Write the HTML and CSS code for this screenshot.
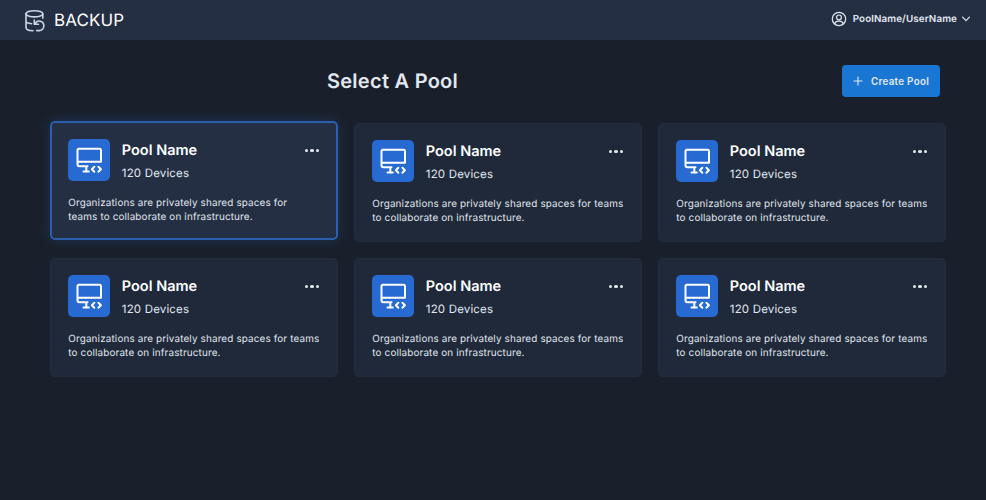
FILE: index.html
```html
<!DOCTYPE html>
<html lang="en">
<head>
<meta charset="utf-8">
<title>Backup</title>
<link rel="stylesheet" href="styles.css">
</head>
<body>
<svg class="sprite" aria-hidden="true">
  <symbol id="device" viewBox="0 0 42 42">
    <path d="M19.500 27.200H11.500a2 2 0 0 1-2-2V11.200a1.500 1.500 0 0 1 1.500-1.500H31.500a1.500 1.500 0 0 1 1.500 1.500V22.800H9.500M18.300 27.200V32.500M15.500 32.600H20.800M26.300 27.700L23.800 30.200L26.300 32.700M30.400 27.700L32.900 30.200L30.400 32.700"/>
  </symbol>
</svg>
<header class="topbar">
  <div class="brand">
    <svg class="brand-icon" viewBox="0 0 22 24">
      <ellipse cx="10.400" cy="4.800" rx="8.400" ry="3.100"/>
      <path d="M2 4.800V18.400C2 20.200 4.900 21.500 9 21.700M18.800 4.800V9.200M2 12c0 1.400 2.300 2.400 5.600 2.700M10.300 11v4.200h4.200M10.700 15.200C12 12.600 14.300 11.600 16.300 12.200a4.800 4.800 0 0 1-.8 9.400H12.700"/>
    </svg>
    <span>BACKUP</span>
  </div>
  <div class="account">
    <svg class="user-icon" viewBox="0 0 16 16"><circle cx="8" cy="8" r="6.700"/><circle cx="8" cy="6.400" r="2.400"/><path d="M3.600 13C4.200 11 5.600 10.200 8 10.200S11.800 11 12.400 13"/></svg>
    <span>PoolName/UserName</span>
    <svg class="chevron" viewBox="0 0 8 6"><path d="M.6 1.200L4 4.600L7.400 1.200"/></svg>
  </div>
</header>
<main>
  <div class="heading">
    <h1>Select A Pool</h1>
    <button class="create"><svg viewBox="0 0 10 10"><path d="M5 1V9M1 5H9"/></svg><span>Create Pool</span></button>
  </div>
  <div class="pools">
    <article class="card selected">
      <div class="card-head"><svg class="tile"><use href="#device"/></svg><div class="info"><h2>Pool Name</h2><p>120 Devices</p></div><div class="more"><i></i><i></i><i></i></div></div>
      <p class="desc">Organizations are privately shared spaces for teams to collaborate on infrastructure.</p>
    </article>
    <article class="card">
      <div class="card-head"><svg class="tile"><use href="#device"/></svg><div class="info"><h2>Pool Name</h2><p>120 Devices</p></div><div class="more"><i></i><i></i><i></i></div></div>
      <p class="desc">Organizations are privately shared spaces for teams to collaborate on infrastructure.</p>
    </article>
    <article class="card">
      <div class="card-head"><svg class="tile"><use href="#device"/></svg><div class="info"><h2>Pool Name</h2><p>120 Devices</p></div><div class="more"><i></i><i></i><i></i></div></div>
      <p class="desc">Organizations are privately shared spaces for teams to collaborate on infrastructure.</p>
    </article>
    <article class="card">
      <div class="card-head"><svg class="tile"><use href="#device"/></svg><div class="info"><h2>Pool Name</h2><p>120 Devices</p></div><div class="more"><i></i><i></i><i></i></div></div>
      <p class="desc">Organizations are privately shared spaces for teams to collaborate on infrastructure.</p>
    </article>
    <article class="card">
      <div class="card-head"><svg class="tile"><use href="#device"/></svg><div class="info"><h2>Pool Name</h2><p>120 Devices</p></div><div class="more"><i></i><i></i><i></i></div></div>
      <p class="desc">Organizations are privately shared spaces for teams to collaborate on infrastructure.</p>
    </article>
    <article class="card">
      <div class="card-head"><svg class="tile"><use href="#device"/></svg><div class="info"><h2>Pool Name</h2><p>120 Devices</p></div><div class="more"><i></i><i></i><i></i></div></div>
      <p class="desc">Organizations are privately shared spaces for teams to collaborate on infrastructure.</p>
    </article>
  </div>
</main>
</body>
</html>
```
FILE: styles.css
```css
* { box-sizing: border-box; }
body { margin: 0; height: 500px; overflow: hidden; background: #1a202b; color: #e2e8f0; font-family: Inter, "Liberation Sans", sans-serif; text-rendering: geometricPrecision; }
h1, h2, p { margin: 0; }
svg { fill: none; stroke: currentColor; stroke-linecap: round; stroke-linejoin: round; flex: none; }
.sprite { display: none; }
.topbar { height: 40px; background: #242f43; display: flex; justify-content: space-between; padding: 0 16px 0 24px; }
.brand { display: flex; align-items: center; gap: 8px; padding-top: 1px; font-size: 17px; letter-spacing: 0.1px; color: #fff; }
.brand-icon { width: 22px; height: 24px; color: #cbd5e8; stroke-width: 1.6; }
.brand span { padding-top: 1px; }
.account { display: flex; align-items: center; height: 38px; font-size: 9.800px; font-weight: 600; letter-spacing: 0.12px; }
.user-icon { width: 16px; height: 16px; margin-right: 6px; stroke-width: 1.2; }
.chevron { width: 8px; height: 6px; margin-left: 5px; stroke-width: 1.2; }
main { padding: 25px 39.500px 0 50.300px; }
.heading { display: flex; justify-content: space-between; height: 32px; margin-bottom: 25.700px; padding-right: 6.500px; }
h1 { margin-left: 276.700px; font-size: 20px; line-height: 32px; font-weight: 600; letter-spacing: 0.27px; }
.create { width: 98px; height: 32px; border: 0; border-radius: 4px; padding: 0; background: #1976d2; color: #e2e8f0; display: flex; align-items: center; justify-content: center; gap: 8px; font: 600 9.800px Inter, sans-serif; letter-spacing: 0.3px; }
.create svg { width: 10px; height: 10px; stroke-width: 1.1; }
.pools { display: grid; grid-template-columns: repeat(3, 288px); grid-auto-rows: 119px; gap: 16px; }
.card { padding: 16.300px 17px 0; border: 0.500px solid #222d3e; border-radius: 5px; background: #1f2939; }
.selected { margin-top: -1.500px; height: 118.500px; padding: 15.800px 16px 0; border: 2px solid #2c5ead; background: #242f43; box-shadow: 0 0 12px #1d3557; }
.card-head { display: flex; height: 42px; }
.tile { width: 42px; height: 42px; border-radius: 5px; background: #276bd2; color: #fff; stroke-width: 2; }
.info { flex: 1; margin-left: 11.500px; padding-top: 1px; }
h2 { font-size: 14.500px; line-height: 22px; font-weight: 600; color: #fff; letter-spacing: 0; }
.info p { font-size: 11.500px; line-height: 16px; margin-top: 3.500px; letter-spacing: 0.17px; }
.more { display: flex; gap: 2px; padding: 9.700px 1.500px 0 0; }
.more i { width: 3.200px; height: 3.200px; border-radius: 50%; background: #e2e8f0; }
.desc { margin-top: 15px; margin-right: -6px; font-size: 9.900px; line-height: 14px; letter-spacing: 0.155px; }
.selected .desc { margin-right: 10px; }
```
